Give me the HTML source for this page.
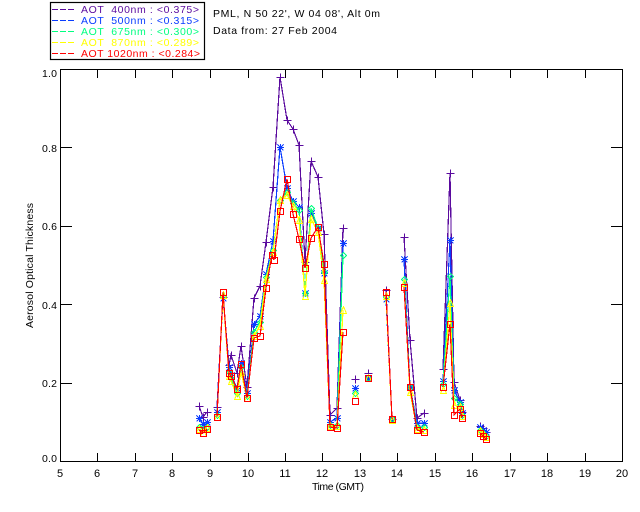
<!DOCTYPE html>
<html><head><meta charset="utf-8"><title>Aerosol Optical Thickness</title>
<style>
html,body{margin:0;padding:0;background:#fff}
svg{display:block}
text{font-family:"Liberation Sans",sans-serif;font-size:10.5px;fill:#000}
.c{text-anchor:middle;font-size:11px}
.s{fill:none;stroke-width:1.2;shape-rendering:crispEdges;marker-start:var(--m);marker-mid:var(--m);marker-end:var(--m)}
.l{fill:none;stroke-width:1.2;shape-rendering:crispEdges}
</style></head><body>
<svg width="640" height="512" viewBox="0 0 640 512" xmlns="http://www.w3.org/2000/svg">
<defs>
<marker id="mp" markerUnits="userSpaceOnUse" markerWidth="14" markerHeight="14" refX="7" refY="7" overflow="visible"><path d="M3.5 7.5H11.5M7.5 3.5V11.5" fill="none" stroke="#5a0a9e" stroke-width="1" shape-rendering="crispEdges"/></marker>
<marker id="mb" markerUnits="userSpaceOnUse" markerWidth="14" markerHeight="14" refX="7" refY="7" overflow="visible"><path d="M4 7.5H11M7.5 4V11M4.5 4.5L10.5 10.5M10.5 4.5L4.5 10.5" fill="none" stroke="#0a3cff" stroke-width="1" shape-rendering="crispEdges"/><rect x="6" y="6" width="3" height="3" fill="#0a3cff" shape-rendering="crispEdges"/></marker>
<marker id="mg" markerUnits="userSpaceOnUse" markerWidth="14" markerHeight="14" refX="7" refY="7" overflow="visible"><path d="M7.5 4.5L10.5 7.5L7.5 10.5L4.5 7.5Z" fill="none" stroke="#00ff80" stroke-width="1" shape-rendering="crispEdges"/></marker>
<marker id="my" markerUnits="userSpaceOnUse" markerWidth="14" markerHeight="14" refX="7" refY="7" overflow="visible"><path d="M7.5 3.5L10.5 10.5H4.5Z" fill="none" stroke="#ffff00" stroke-width="1" shape-rendering="crispEdges"/></marker>
</defs>

<!-- legend -->
<rect x="50.5" y="2.5" width="154" height="57" fill="none" stroke="#000" stroke-width="1.2"/>
<g stroke-width="1" shape-rendering="crispEdges" stroke-dasharray="6 2">
<path d="M52 9.5H75" stroke="#5a0a9e"/>
<path d="M52 20.5H75" stroke="#0a3cff"/>
<path d="M52 31.5H75" stroke="#00ff80"/>
<path d="M52 42.5H75" stroke="#ffff00"/>
<path d="M52 53.5H75" stroke="#ff0000"/>
</g>
<g>
<text x="81" y="13" textLength="118" xml:space="preserve" style="fill:#5a0a9e">AOT  400nm : &lt;0.375&gt;</text>
<text x="81" y="24" textLength="118" xml:space="preserve" style="fill:#0a3cff">AOT  500nm : &lt;0.315&gt;</text>
<text x="81" y="35" textLength="118" xml:space="preserve" style="fill:#00ff80">AOT  675nm : &lt;0.300&gt;</text>
<text x="81" y="46" textLength="118" xml:space="preserve" style="fill:#ffff00">AOT  870nm : &lt;0.289&gt;</text>
<text x="81" y="57" textLength="119" xml:space="preserve" style="fill:#ff0000">AOT 1020nm : &lt;0.284&gt;</text>
</g>
<text x="213" y="17" textLength="167" xml:space="preserve">PML, N 50 22', W 04 08', Alt 0m</text>
<text x="213" y="34" textLength="124" xml:space="preserve">Data from: 27 Feb 2004</text>

<!-- axes -->
<g fill="none" stroke="#000" stroke-width="1" shape-rendering="crispEdges">
<rect x="60.5" y="69.5" width="562" height="392"/>
<path d="M97.5 461V453M135.5 461V453M172.5 461V453M210.5 461V453M248.5 461V453M285.5 461V453M322.5 461V453M360.5 461V453M397.5 461V453M435.5 461V453M472.5 461V453M510.5 461V453M547.5 461V453M585.5 461V453"/>
<path d="M97.5 70V78M135.5 70V78M172.5 70V78M210.5 70V78M248.5 70V78M285.5 70V78M322.5 70V78M360.5 70V78M397.5 70V78M435.5 70V78M472.5 70V78M510.5 70V78M547.5 70V78M585.5 70V78"/>
<path d="M61 147.5H72M61 226.5H72M61 304.5H72M61 383.5H72"/>
<path d="M622 147.5H611M622 226.5H611M622 304.5H611M622 383.5H611"/>
</g>
<g>
<text x="42" y="77" textLength="15">1.0</text>
<text x="42" y="152" textLength="15">0.8</text>
<text x="42" y="230" textLength="15">0.6</text>
<text x="42" y="309" textLength="15">0.4</text>
<text x="42" y="387" textLength="15">0.2</text>
<text x="42" y="462" textLength="15">0.0</text>
</g>
<g>
<text class="c" x="60" y="477">5</text><text class="c" x="97" y="477">6</text><text class="c" x="135" y="477">7</text><text class="c" x="172" y="477">8</text><text class="c" x="210" y="477">9</text><text class="c" x="248" y="477">10</text><text class="c" x="285" y="477">11</text><text class="c" x="322" y="477">12</text><text class="c" x="360" y="477">13</text><text class="c" x="397" y="477">14</text><text class="c" x="435" y="477">15</text><text class="c" x="472" y="477">16</text><text class="c" x="510" y="477">17</text><text class="c" x="547" y="477">18</text><text class="c" x="585" y="477">19</text><text class="c" x="622" y="477">20</text>
</g>
<text x="312" y="490" textLength="52">Time (GMT)</text>
<text transform="translate(33 328) rotate(-90)" x="0" y="0" textLength="125" xml:space="preserve">Aerosol Optical Thickness</text>

<!-- series -->
<path class="s" style="--m:url(#mp)" stroke="#5a0a9e" d="M199 406L203 417L207 412M217 407L223 297L229 365L231 355L237 373L241 346L247 387L254 298L260 286L266 242L273 187L280 77L287 120L293 129L299 145L305 262L311 161L318 177L324 234L330 415L337 408L343 228M355 379L355 379M368 373L368 373M386 290L392 419M404 237L410 340L417 418L424 413M443 369L450 173L454 382L460 400L462 412M480 426L483 428L486 432"/>
<path class="s" style="--m:url(#mb)" stroke="#0a3cff" d="M199 418L203 424L207 422M217 412L223 298L229 367L231 375L237 388L241 363L247 393L254 324L260 316L266 274L273 241L280 147L287 188L293 201L299 207L305 293L311 213L318 228L324 273L330 422L337 418L343 243M355 388L355 388M368 378L368 378M386 299L392 419M404 259L410 387L417 423L424 423M443 381L450 240L454 390L460 402L462 413M480 427L483 430L486 432"/>
<path class="s" style="--m:url(#mg)" stroke="#00ff80" d="M199 427L203 429L207 427M217 415L223 296L229 372L231 378L237 393L241 367L247 396L254 332L260 322L266 277L273 250L280 200L287 192L293 203L299 210L305 293L311 208L318 228L324 272L330 425L337 425L343 255M355 393L355 393M368 378L368 378M386 297L392 419M404 279L410 387L417 427L424 427M443 384L450 276L454 398L460 404L462 415M480 430L483 433L486 436"/>
<path class="s" style="--m:url(#my)" stroke="#ffff00" d="M199 429L203 433L207 428M217 417L223 295L229 376L231 381L237 396L241 372L247 398L254 336L260 326L266 279L273 252L280 200L287 195L293 206L299 220L305 296L311 219L318 232L324 280L330 426L337 426L343 310M355 395L355 395M368 378L368 378M386 296L392 420M404 283L410 392L417 429L424 430M443 390L450 303L454 405L460 407L462 416M480 431L483 434L486 437"/>
<path class="l" stroke="#ff0000" d="M199 430L203 433L207 429M217 417L223 292L229 373L231 376L237 389L241 364L247 398L254 338L260 336L266 288L272 255L274 260L280 211L287 179L293 214L299 239L305 268L311 238L318 227L324 264L330 427L337 428L343 332M386 292L392 419M404 287L410 387L417 430L424 432M443 387L450 324L454 415L460 409L462 418M480 433L483 436L486 439"/>
<path fill="none" stroke="#ff0000" stroke-width="1" shape-rendering="crispEdges" d="M196.5 427.5h6v6h-6zM200.5 430.5h6v6h-6zM204.5 426.5h6v6h-6zM214.5 414.5h6v6h-6zM220.5 289.5h6v6h-6zM226.5 370.5h6v6h-6zM228.5 373.5h6v6h-6zM234.5 386.5h6v6h-6zM238.5 361.5h6v6h-6zM244.5 395.5h6v6h-6zM251.5 335.5h6v6h-6zM257.5 333.5h6v6h-6zM263.5 285.5h6v6h-6zM269.5 252.5h6v6h-6zM271.5 257.5h6v6h-6zM277.5 208.5h6v6h-6zM284.5 176.5h6v6h-6zM290.5 211.5h6v6h-6zM296.5 236.5h6v6h-6zM302.5 265.5h6v6h-6zM308.5 235.5h6v6h-6zM315.5 224.5h6v6h-6zM321.5 261.5h6v6h-6zM327.5 424.5h6v6h-6zM334.5 425.5h6v6h-6zM340.5 329.5h6v6h-6zM352.5 398.5h6v6h-6zM365.5 375.5h6v6h-6zM383.5 289.5h6v6h-6zM389.5 416.5h6v6h-6zM401.5 284.5h6v6h-6zM407.5 384.5h6v6h-6zM414.5 427.5h6v6h-6zM421.5 429.5h6v6h-6zM440.5 384.5h6v6h-6zM447.5 321.5h6v6h-6zM451.5 412.5h6v6h-6zM457.5 406.5h6v6h-6zM459.5 415.5h6v6h-6zM477.5 430.5h6v6h-6zM480.5 433.5h6v6h-6zM483.5 436.5h6v6h-6z"/>
</svg>
</body></html>
